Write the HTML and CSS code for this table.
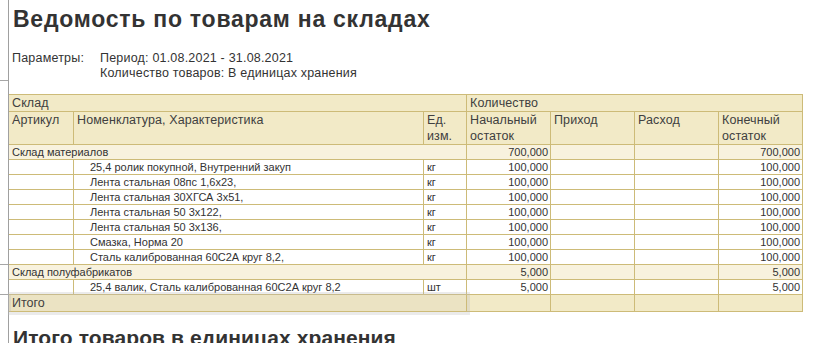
FILE: index.html
```html
<!DOCTYPE html>
<html lang="ru">
<head>
<meta charset="utf-8">
<title>Ведомость по товарам на складах</title>
<link rel="stylesheet" href="styles.css">
</head>
<body>
<div class="page">
  <div class="gutter">
    <div class="gap g1"></div><div class="tick"></div>
    <div class="gap g2"></div><div class="tick"></div>
    <div class="gap g3"></div><div class="tick"></div>
  </div>
  <div class="sheet">
    <h1 class="title">Ведомость по товарам на складах</h1>
    <div class="params">
      <div class="plabel">Параметры:</div>
      <div class="pvalues">
        <div>Период: 01.08.2021 - 31.08.2021</div>
        <div>Количество товаров: В единицах хранения</div>
      </div>
    </div>

    <div class="report">
      <div class="c hd r17 span3">Склад</div>
      <div class="c hd r17 span4">Количество</div>

      <div class="c hd r33">Артикул</div>
      <div class="c hd r33">Номенклатура, Характеристика</div>
      <div class="c hd r33">Ед.<br>изм.</div>
      <div class="c hd r33">Начальный<br>остаток</div>
      <div class="c hd r33">Приход</div>
      <div class="c hd r33">Расход</div>
      <div class="c hd r33">Конечный<br>остаток</div>

      <div class="c grp span3">Склад материалов</div>
      <div class="c grp num">700,000</div>
      <div class="c grp num"></div>
      <div class="c grp num"></div>
      <div class="c grp num">700,000</div>

      <div class="c"></div><div class="c item">25,4 ролик покупной, Внутренний закуп</div><div class="c">кг</div><div class="c num">100,000</div><div class="c num"></div><div class="c num"></div><div class="c num">100,000</div>
      <div class="c"></div><div class="c item">Лента стальная 08пс 1,6х23,</div><div class="c">кг</div><div class="c num">100,000</div><div class="c num"></div><div class="c num"></div><div class="c num">100,000</div>
      <div class="c"></div><div class="c item">Лента стальная 30ХГСА 3х51,</div><div class="c">кг</div><div class="c num">100,000</div><div class="c num"></div><div class="c num"></div><div class="c num">100,000</div>
      <div class="c"></div><div class="c item">Лента стальная 50 3х122,</div><div class="c">кг</div><div class="c num">100,000</div><div class="c num"></div><div class="c num"></div><div class="c num">100,000</div>
      <div class="c"></div><div class="c item">Лента стальная 50 3х136,</div><div class="c">кг</div><div class="c num">100,000</div><div class="c num"></div><div class="c num"></div><div class="c num">100,000</div>
      <div class="c"></div><div class="c item">Смазка, Норма 20</div><div class="c">кг</div><div class="c num">100,000</div><div class="c num"></div><div class="c num"></div><div class="c num">100,000</div>
      <div class="c"></div><div class="c item">Сталь калиброванная 60С2А круг 8,2,</div><div class="c">кг</div><div class="c num">100,000</div><div class="c num"></div><div class="c num"></div><div class="c num">100,000</div>

      <div class="c grp span3">Склад полуфабрикатов</div>
      <div class="c grp num">5,000</div>
      <div class="c grp num"></div>
      <div class="c grp num"></div>
      <div class="c grp num">5,000</div>

      <div class="c"></div><div class="c item">25,4 валик, Сталь калиброванная 60С2А круг 8,2</div><div class="c">шт</div><div class="c num">5,000</div><div class="c num"></div><div class="c num"></div><div class="c num">5,000</div>

      <div class="c tot r17 span3 selected">Итого</div>
      <div class="c tot r17"></div>
      <div class="c tot r17"></div>
      <div class="c tot r17"></div>
      <div class="c tot r17"></div>
    </div>

    <h2 class="subtitle">Итого товаров в единицах хранения</h2>
  </div>
</div>
</body>
</html>
```

FILE: styles.css
```css
html, body {
  margin: 0;
  padding: 0;
  background: #ffffff;
  overflow: hidden;
}

body {
  font-family: Arial, "Liberation Sans", sans-serif;
  color: #333333;
}

.page {
  display: grid;
  grid-template-columns: 8px 1fr;
  width: 820px;
  height: 343px;
  overflow: hidden;
}

.gutter {
  display: flex;
  flex-direction: column;
}

.gutter .g1 { height: 80px; }
.gutter .g2 { height: 183px; }
.gutter .g3 { height: 29px; }

.gutter .tick {
  height: 1px;
  background: #a6a6a6;
}

.sheet {
  border-left: 1px solid #a0a0a0;
  padding-top: 6px;
}

.title {
  margin: 0 0 0 4px;
  font-size: 23px;
  line-height: 26px;
  letter-spacing: 0.75px;
  font-weight: bold;
  color: #333333;
}

.params {
  display: flex;
  margin: 19px 0 0 3px;
  font-size: 12.5px;
  line-height: 15px;
  letter-spacing: 0.2px;
  color: #333333;
}

.plabel {
  width: 88px;
}

.report {
  margin-top: 13px;
  display: grid;
  grid-template-columns: 65px 350px 43px 84px 84px 84px 84px;
  width: 794px;
  border-top: 1px solid #cdbb78;
  font-size: 11px;
  line-height: 14px;
  color: #333333;
}

.c {
  box-sizing: border-box;
  height: 15px;
  border-right: 1px solid #cdbb78;
  border-bottom: 1px solid #cdbb78;
  padding: 0 2px 0 3px;
  white-space: nowrap;
  overflow: hidden;
  background: #ffffff;
}

.span3 { grid-column: span 3; }
.span4 { grid-column: span 4; }

.hd {
  background: #f2eac7;
  font-size: 12.5px;
  line-height: 16px;
  letter-spacing: 0.1px;
  color: #404040;
}

.r17 { height: 17px; }
.r33 { height: 33px; }

.grp {
  background: #f8f2de;
}

.item {
  padding-left: 16px;
}

.num {
  text-align: right;
}

.tot {
  background: #f2eac7;
  font-size: 12.5px;
  line-height: 16px;
  color: #404040;
}

.selected {
  position: relative;
  overflow: visible;
  background: #ebe3c3;
}

.selected::after {
  content: "";
  position: absolute;
  left: -1px;
  top: -3px;
  right: -4px;
  bottom: -4px;
  border: 3px solid rgba(190, 190, 190, 0.3);
  pointer-events: none;
}

.subtitle {
  margin: 14px 0 0 4px;
  font-size: 21px;
  line-height: 24px;
  letter-spacing: 0.1px;
  font-weight: bold;
  color: #333333;
}
```
